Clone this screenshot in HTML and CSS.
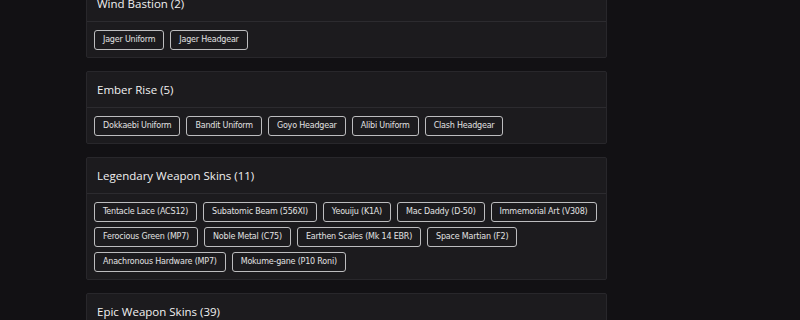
FILE: index.html
```html
<!DOCTYPE html>
<html lang="en">
<head>
    <meta charset="UTF-8">
    <title>Collection</title>
    <link rel="stylesheet" href="styles.css">
</head>
<body>
    <div class="collection">
        <div class="group">
            <div class="group-title">Wind Bastion (2)</div>
            <div class="group-items">
                <span class="item">Jager Uniform</span>
                <span class="item">Jager Headgear</span>
            </div>
        </div>
        <div class="group">
            <div class="group-title">Ember Rise (5)</div>
            <div class="group-items">
                <span class="item">Dokkaebi Uniform</span>
                <span class="item">Bandit Uniform</span>
                <span class="item">Goyo Headgear</span>
                <span class="item">Alibi Uniform</span>
                <span class="item">Clash Headgear</span>
            </div>
        </div>
        <div class="group">
            <div class="group-title">Legendary Weapon Skins (11)</div>
            <div class="group-items">
                <span class="item">Tentacle Lace (ACS12)</span>
                <span class="item">Subatomic Beam (556XI)</span>
                <span class="item">Yeouiju (K1A)</span>
                <span class="item">Mac Daddy (D-50)</span>
                <span class="item">Immemorial Art (V308)</span>
                <span class="item">Ferocious Green (MP7)</span>
                <span class="item">Noble Metal (C75)</span>
                <span class="item">Earthen Scales (Mk 14 EBR)</span>
                <span class="item">Space Martian (F2)</span>
                <span class="item">Anachronous Hardware (MP7)</span>
                <span class="item">Mokume-gane (P10 Roni)</span>
            </div>
        </div>
        <div class="group">
            <div class="group-title">Epic Weapon Skins (39)</div>
            <div class="group-items">
                <span class="item">Placeholder</span>
            </div>
        </div>
    </div>
</body>
</html>
```

FILE: styles.css
```css
body {
    margin: 0;
    padding: 0;
    background-color: #121114;
    font-family: "DejaVu Sans", sans-serif;
    color: #e8e8e8;
    overflow: hidden;
}
.collection {
    width: 521px;
    margin: -15px 0 0 86px;
    display: flex;
    flex-direction: column;
    gap: 13px;
}
.group {
    background-color: #1c1b1e;
    border: 1px solid #28272b;
    border-radius: 2px;
}
.group-title {
    height: 35px;
    line-height: 35px;
    padding: 0 10px;
    font-family: "Open Sans", sans-serif;
    font-size: 11.5px;
    font-weight: 500;
    color: #f0f0f0;
    border-bottom: 1px solid #2c2b2f;
}
.group-items {
    display: flex;
    flex-wrap: wrap;
    gap: 5px 6px;
    padding: 8px 7px 7px;
}
.item {
    height: 18px;
    line-height: 18px;
    padding: 0 8px;
    border: 1px solid #bdbdbf;
    border-radius: 3px;
    font-size: 8px;
    letter-spacing: -0.2px;
    color: #e2e2e2;
    white-space: nowrap;
}
```
